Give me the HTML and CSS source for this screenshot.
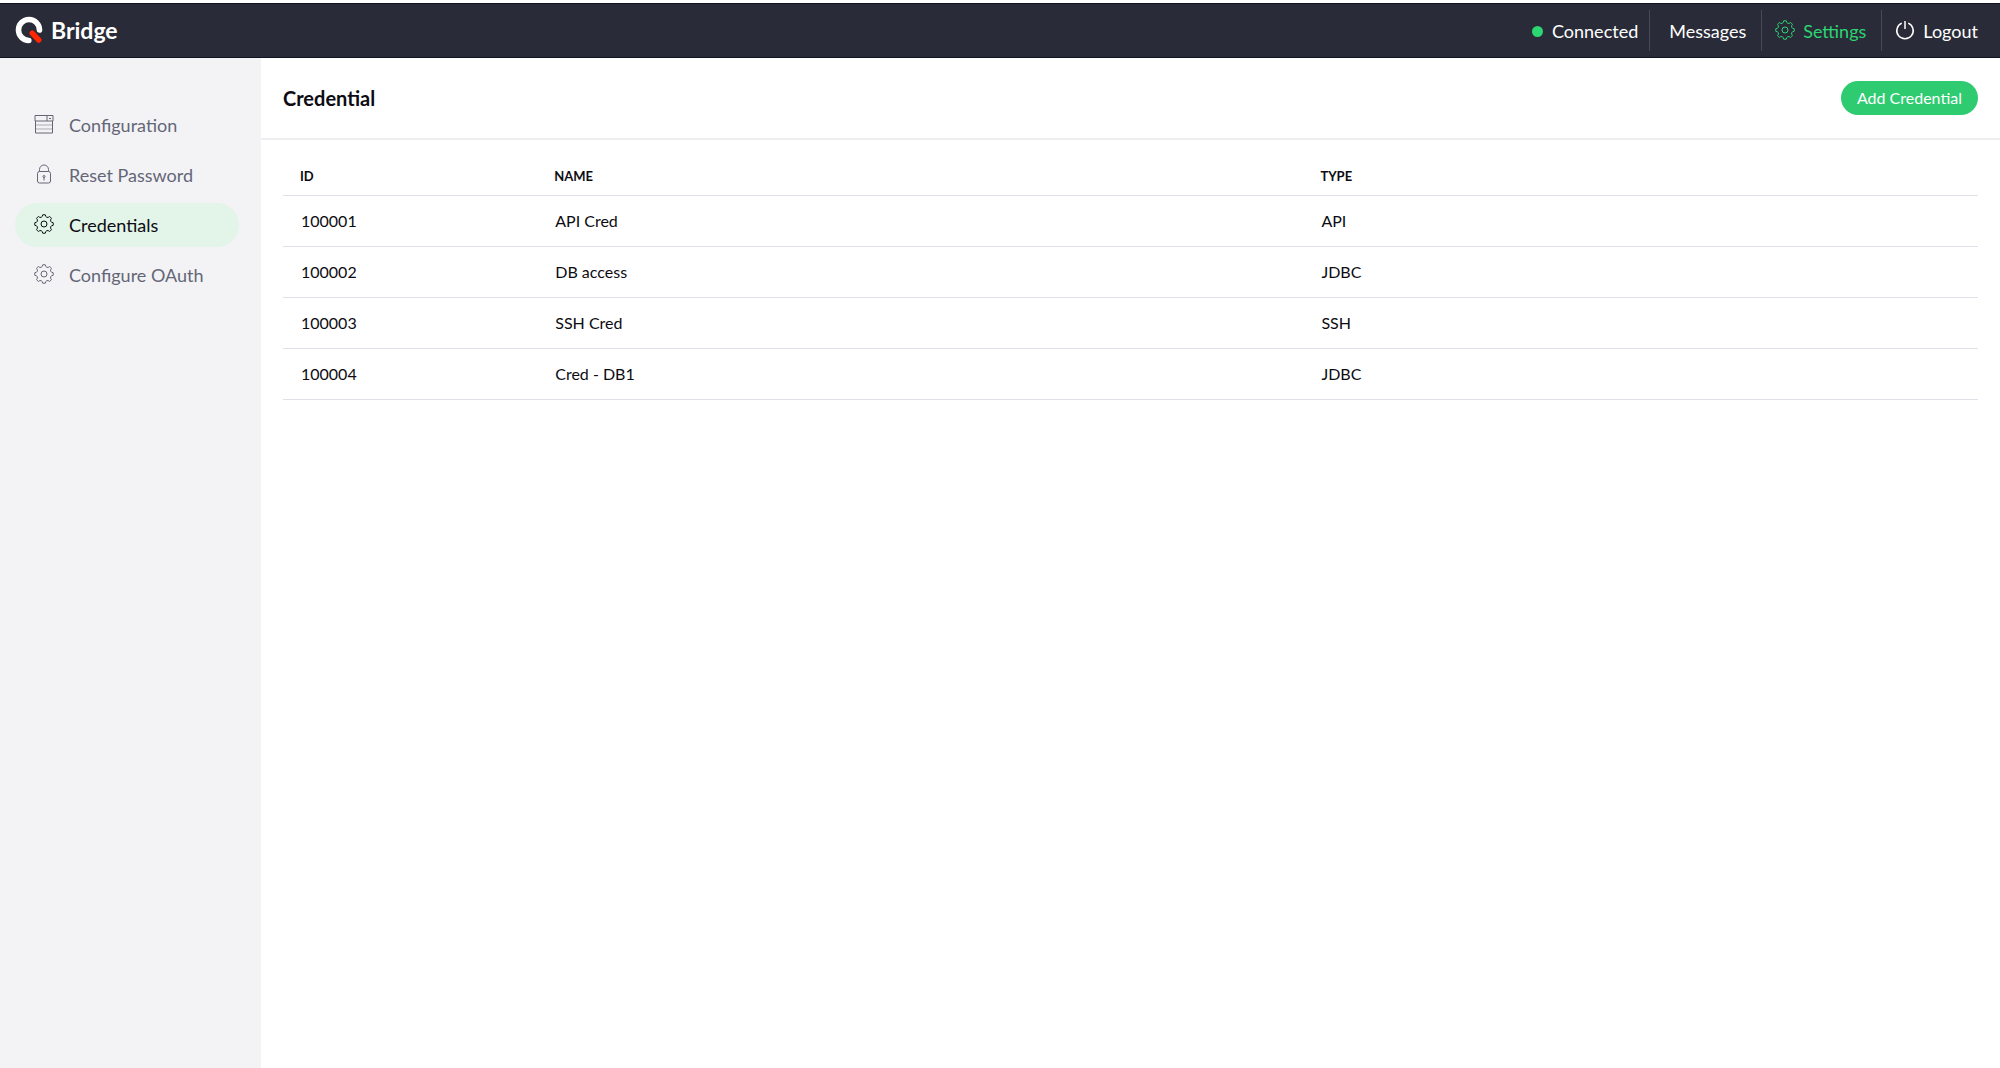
FILE: index.html
```html
<!DOCTYPE html>
<html lang="en">
<head>
    <meta charset="UTF-8">
    <meta name="viewport" content="width=device-width, initial-scale=1.0">
    <title>Bridge - Credentials</title>
    <link rel="stylesheet" href="styles.css">
</head>
<body>

<!-- shared icon shapes -->
<svg class="icon-defs" aria-hidden="true">
    <symbol id="icon-gear" viewBox="-10 -10 20 20">
        <path d="M-1.4-9.1Q0-9.5 1.4-9.1L1.7-7.6Q2.6-6.3 4.2-6.6L5.4-7.4Q6.9-6.9 7.4-5.4L6.6-4.2Q6.3-2.6 7.6-1.7L9.1-1.4Q9.5 0 9.1 1.4L7.6 1.7Q6.3 2.6 6.6 4.2L7.4 5.4Q6.9 6.9 5.4 7.4L4.2 6.6Q2.6 6.3 1.7 7.6L1.4 9.1Q0 9.5-1.4 9.1L-1.7 7.6Q-2.6 6.3-4.2 6.6L-5.4 7.4Q-6.9 6.9-7.4 5.4L-6.6 4.2Q-6.3 2.6-7.6 1.7L-9.1 1.4Q-9.5 0-9.1-1.4L-7.6-1.7Q-6.3-2.6-6.6-4.2L-7.4-5.4Q-6.9-6.9-5.4-7.4L-4.2-6.6Q-2.6-6.3-1.7-7.6Z"/>
        <circle r="3"/>
    </symbol>
</svg>

<header class="navbar">
    <a class="brand" href="#">
        <svg class="logo" viewBox="0 0 28 28" aria-hidden="true">
            <path d="M13.8 24.5A10.5 10.5 0 1 1 24.5 14" fill="none" stroke="#fff" stroke-width="5.6" stroke-linecap="round"/>
            <path d="M17.2 17.2L23.8 24" stroke="#2a2b38" stroke-width="7" stroke-linecap="round"/>
            <path d="M17.2 17.2L23.8 24" stroke="#ff2600" stroke-width="5.4" stroke-linecap="round"/>
        </svg>
        Bridge
    </a>
    <nav class="nav-links">
        <span class="nav-item status"><i class="status-dot"></i>Connected</span>
        <a class="nav-item messages" href="#">Messages</a>
        <a class="nav-item active" href="#"><svg class="icon"><use href="#icon-gear"/></svg>Settings</a>
        <a class="nav-item logout" href="#">
            <svg class="icon" viewBox="0 0 20 20"><path class="power" d="M6.8 3.1A8.2 8.2 0 1 0 13.2 3.1M10 1V9"/></svg>Logout
        </a>
    </nav>
</header>

<div class="layout">
    <aside class="sidebar">
        <a class="side-link" href="#">
            <svg class="icon" viewBox="0 0 20 20"><path d="M1 1.5H19V7H1ZM1.5 7V19H18.5V7M13 1.5V7"/><path d="M1.5 11H18.5M1.5 15H18.5" opacity="0.5"/><path d="M15 4L16 5L17 4"/></svg>
            Configuration
        </a>
        <a class="side-link" href="#">
            <svg class="icon" viewBox="0 0 20 20"><rect x="3.5" y="7.5" width="13" height="11.5" rx="2"/><path d="M5.5 7.5V5.5A4.5 4.5 0 0 1 14.5 5.5V7.5M10 13V16.5"/><circle cx="10" cy="12.5" r="1"/></svg>
            Reset Password
        </a>
        <a class="side-link active" href="#">
            <svg class="icon"><use href="#icon-gear"/></svg>
            Credentials
        </a>
        <a class="side-link" href="#">
            <svg class="icon"><use href="#icon-gear"/></svg>
            Configure OAuth
        </a>
    </aside>

    <main class="content">
        <div class="page-header">
            <h1>Credential</h1>
            <button type="button" class="add-button">Add Credential</button>
        </div>
        <div class="table-wrap">
            <table>
                <thead>
                    <tr><th class="col-id">ID</th><th class="col-name">NAME</th><th>TYPE</th></tr>
                </thead>
                <tbody>
                    <tr><td>100001</td><td>API Cred</td><td>API</td></tr>
                    <tr><td>100002</td><td>DB access</td><td>JDBC</td></tr>
                    <tr><td>100003</td><td>SSH Cred</td><td>SSH</td></tr>
                    <tr><td>100004</td><td>Cred - DB1</td><td>JDBC</td></tr>
                </tbody>
            </table>
        </div>
    </main>
</div>

</body>
</html>
```
FILE: styles.css
```css
* {
    box-sizing: border-box;
}
body {
    display: flex;
    flex-direction: column;
    min-height: 100vh;
    margin: 0;
    padding-top: 3px;
    background-color: #fff;
    color: #0c0c12;
    font-family: Lato, "Liberation Sans", sans-serif;
    font-size: 16px;
}
a {
    color: inherit;
    text-decoration: none;
}
.icon-defs {
    position: absolute;
    width: 0;
    height: 0;
}
.icon {
    width: 20px;
    height: 20px;
    flex: none;
    margin-bottom: 2px;
    fill: none;
    stroke: currentColor;
    stroke-width: 1;
}

/* top bar */
.navbar {
    display: flex;
    justify-content: space-between;
    align-items: center;
    height: 55px;
    padding: 0 22px 0 15px;
    background-color: #2a2b38;
    border-top: 1px solid #11121f;
    border-bottom: 1px solid #11121f;
    color: #fff;
}
.brand {
    display: flex;
    align-items: center;
    gap: 8px;
    padding-bottom: 2px;
    font-size: 23px;
    font-weight: bold;
    line-height: 28px;
}
.logo {
    width: 28px;
    height: 28px;
}
.nav-links {
    display: flex;
    font-size: 18px;
}
.nav-item {
    display: flex;
    align-items: center;
    gap: 8px;
    height: 41px;
    padding: 0 15px 0 13px;
    border-right: 1px solid #484957;
}
.nav-item.status {
    gap: 9px;
    padding-right: 11px;
}
.nav-item.messages {
    padding-left: 19px;
}
.nav-item.active {
    color: #2bd673;
}
.nav-item.logout {
    padding-right: 0;
    border-right: 0;
}
.status-dot {
    width: 11px;
    height: 11px;
    margin-top: 2px;
    border-radius: 50%;
    background-color: #2bd673;
}
.power {
    stroke-width: 1.5;
}

/* side menu */
.layout {
    display: flex;
    flex: 1;
}
.sidebar {
    display: flex;
    flex-direction: column;
    gap: 6px;
    flex: none;
    width: 261px;
    padding: 45px 22px 20px 15px;
    background-color: #f3f3f6;
}
.side-link {
    display: flex;
    align-items: center;
    gap: 15px;
    height: 44px;
    padding: 0 19px;
    border-radius: 22px;
    color: #646676;
    font-size: 18px;
}
.side-link.active {
    background-color: #e3f4e9;
    color: #0c0c12;
}

/* page */
.content {
    flex: 1;
}
.page-header {
    display: flex;
    justify-content: space-between;
    align-items: center;
    height: 82px;
    padding: 0 22px;
    border-bottom: 2px solid #eeeef1;
}
h1 {
    margin: 0;
    font-size: 20px;
    font-weight: bold;
}
.add-button {
    height: 34px;
    padding: 0 16px;
    border: none;
    border-radius: 17px;
    background-color: #2ecb71;
    color: #fff;
    font-family: inherit;
    font-size: 16px;
    line-height: 32px;
    cursor: pointer;
}
.table-wrap {
    padding: 16px 22px;
}
table {
    width: 100%;
    border-collapse: collapse;
    table-layout: fixed;
}
th,
td {
    height: 51px;
    padding: 0 18px;
    border-bottom: 1px solid #e0e1e8;
    text-align: left;
}
th {
    height: 39px;
    padding: 1px 17px 0;
    font-size: 13px;
}
.col-id {
    width: 15%;
}
.col-name {
    width: 45.2%;
}
```
